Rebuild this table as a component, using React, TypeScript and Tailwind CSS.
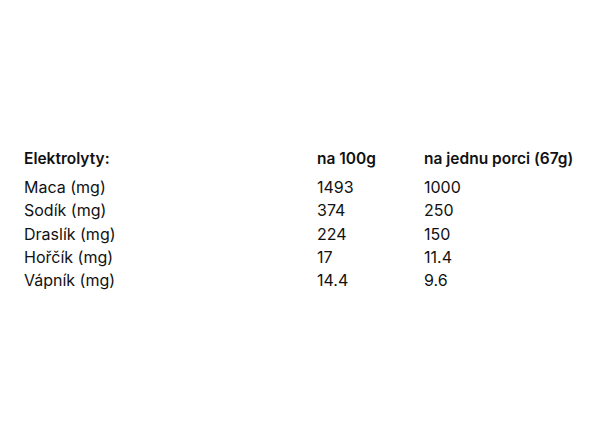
import React from 'react';

const rows = [
  ['Maca (mg)', '1493', '1000'],
  ['Sodík (mg)', '374', '250'],
  ['Draslík (mg)', '224', '150'],
  ['Hořčík (mg)', '17', '11.4'],
  ['Vápník (mg)', '14.4', '9.6'],
];

export default function App() {
  return (
    <div className="w-[600px] h-[440px] bg-white text-[#111] font-['Inter',sans-serif] text-[16px]">
      <div className="pt-[147px] pl-[24px]">
        <table className="border-collapse">
          <thead>
            <tr className="font-semibold text-[15.5px]">
              <td className="w-[293px] pb-[6px] leading-[23px]">Elektrolyty:</td>
              <td className="w-[107px] pb-[6px] leading-[23px]">na 100g</td>
              <td className="pb-[6px] leading-[23px]">na jednu porci (67g)</td>
            </tr>
          </thead>
          <tbody>
            {rows.map((r) => (
              <tr key={r[0]} className="leading-[23.3px]">
                <td>{r[0]}</td>
                <td>{r[1]}</td>
                <td>{r[2]}</td>
              </tr>
            ))}
          </tbody>
        </table>
      </div>
    </div>
  );
}
